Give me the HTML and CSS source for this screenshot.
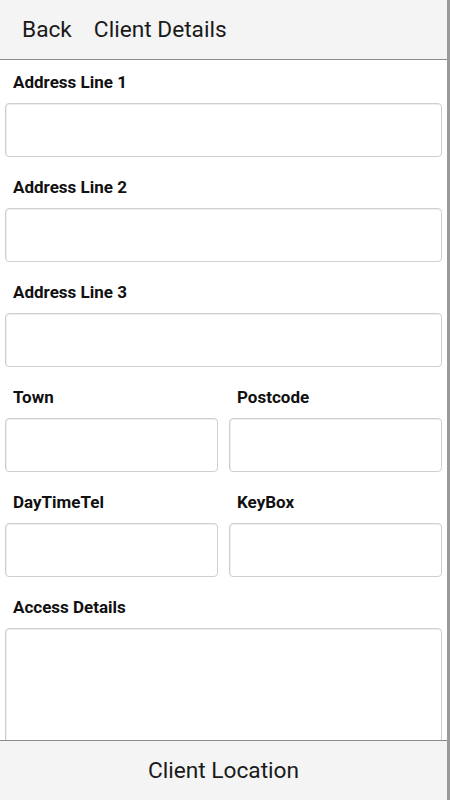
FILE: index.html
```html
<!DOCTYPE html>
<html lang="en">
<head>
    <meta charset="UTF-8">
    <meta name="viewport" content="width=device-width, initial-scale=1.0">
    <title>Client Details</title>
    <link rel="stylesheet" href="styles.css">
</head>
<body>

    <div class="app">
        <!-- Top bar -->
        <div class="top-bar">
            <span class="back">Back</span>
            <span class="title">Client Details</span>
        </div>

        <!-- Form -->
        <form class="client-form">
            <div class="field">
                <label for="addr1">Address Line 1</label>
                <input type="text" id="addr1">
            </div>
            <div class="field">
                <label for="addr2">Address Line 2</label>
                <input type="text" id="addr2">
            </div>
            <div class="field">
                <label for="addr3">Address Line 3</label>
                <input type="text" id="addr3">
            </div>
            <div class="row">
                <div class="field">
                    <label for="town">Town</label>
                    <input type="text" id="town">
                </div>
                <div class="field">
                    <label for="postcode">Postcode</label>
                    <input type="text" id="postcode">
                </div>
            </div>
            <div class="row">
                <div class="field">
                    <label for="daytel">DayTimeTel</label>
                    <input type="text" id="daytel">
                </div>
                <div class="field">
                    <label for="keybox">KeyBox</label>
                    <input type="text" id="keybox">
                </div>
            </div>
            <div class="field">
                <label for="access">Access Details</label>
                <textarea id="access"></textarea>
            </div>
        </form>

        <!-- Bottom bar -->
        <div class="bottom-bar">Client Location</div>
    </div>

</body>
</html>
```

FILE: styles.css
```css
/* General page styling */
html, body {
    margin: 0;
    height: 100%;
    overflow: hidden;
}

body {
    background-color: #ffffff;
    font-family: Roboto, "Liberation Sans", sans-serif;
    color: #111;
}

.app {
    width: 447px;
    height: 800px;
    border-right: 3px solid #9a9a9a;
    display: flex;
    flex-direction: column;
    overflow: hidden;
}

/* Top bar */
.top-bar {
    flex: none;
    height: 59px;
    background-color: #f4f4f4;
    border-bottom: 1px solid #8a8a8a;
    display: flex;
    align-items: center;
    padding-left: 22px;
    gap: 22px;
    font-size: 22.7px;
    color: #1a1a1a;
}

/* Form */
.client-form {
    flex: 1;
    overflow: hidden;
    padding: 11px 5px 0 5px;
}

.field {
    display: flex;
    flex-direction: column;
    margin-bottom: 19px;
}

.row {
    display: grid;
    grid-template-columns: 1fr 1fr;
    gap: 11px;
}

label {
    font-weight: bold;
    font-size: 17px;
    line-height: 20px;
    padding: 1px 0 0 8px;
    margin-bottom: 11px;
    color: #111;
}

input, textarea {
    box-sizing: border-box;
    height: 54px;
    width: 100%;
    margin: 0;
    border: 1px solid #cfcfcf;
    border-radius: 4px;
    box-shadow: inset 1px 1px 0 #eeeeee;
    background: #fff;
    font-family: inherit;
    font-size: 16px;
}

textarea {
    height: 160px;
    resize: none;
}

/* Bottom bar */
.bottom-bar {
    flex: none;
    height: 59px;
    background-color: #f4f4f4;
    border-top: 1px solid #8a8a8a;
    display: flex;
    align-items: center;
    justify-content: center;
    font-size: 22.7px;
    color: #1a1a1a;
}
```
